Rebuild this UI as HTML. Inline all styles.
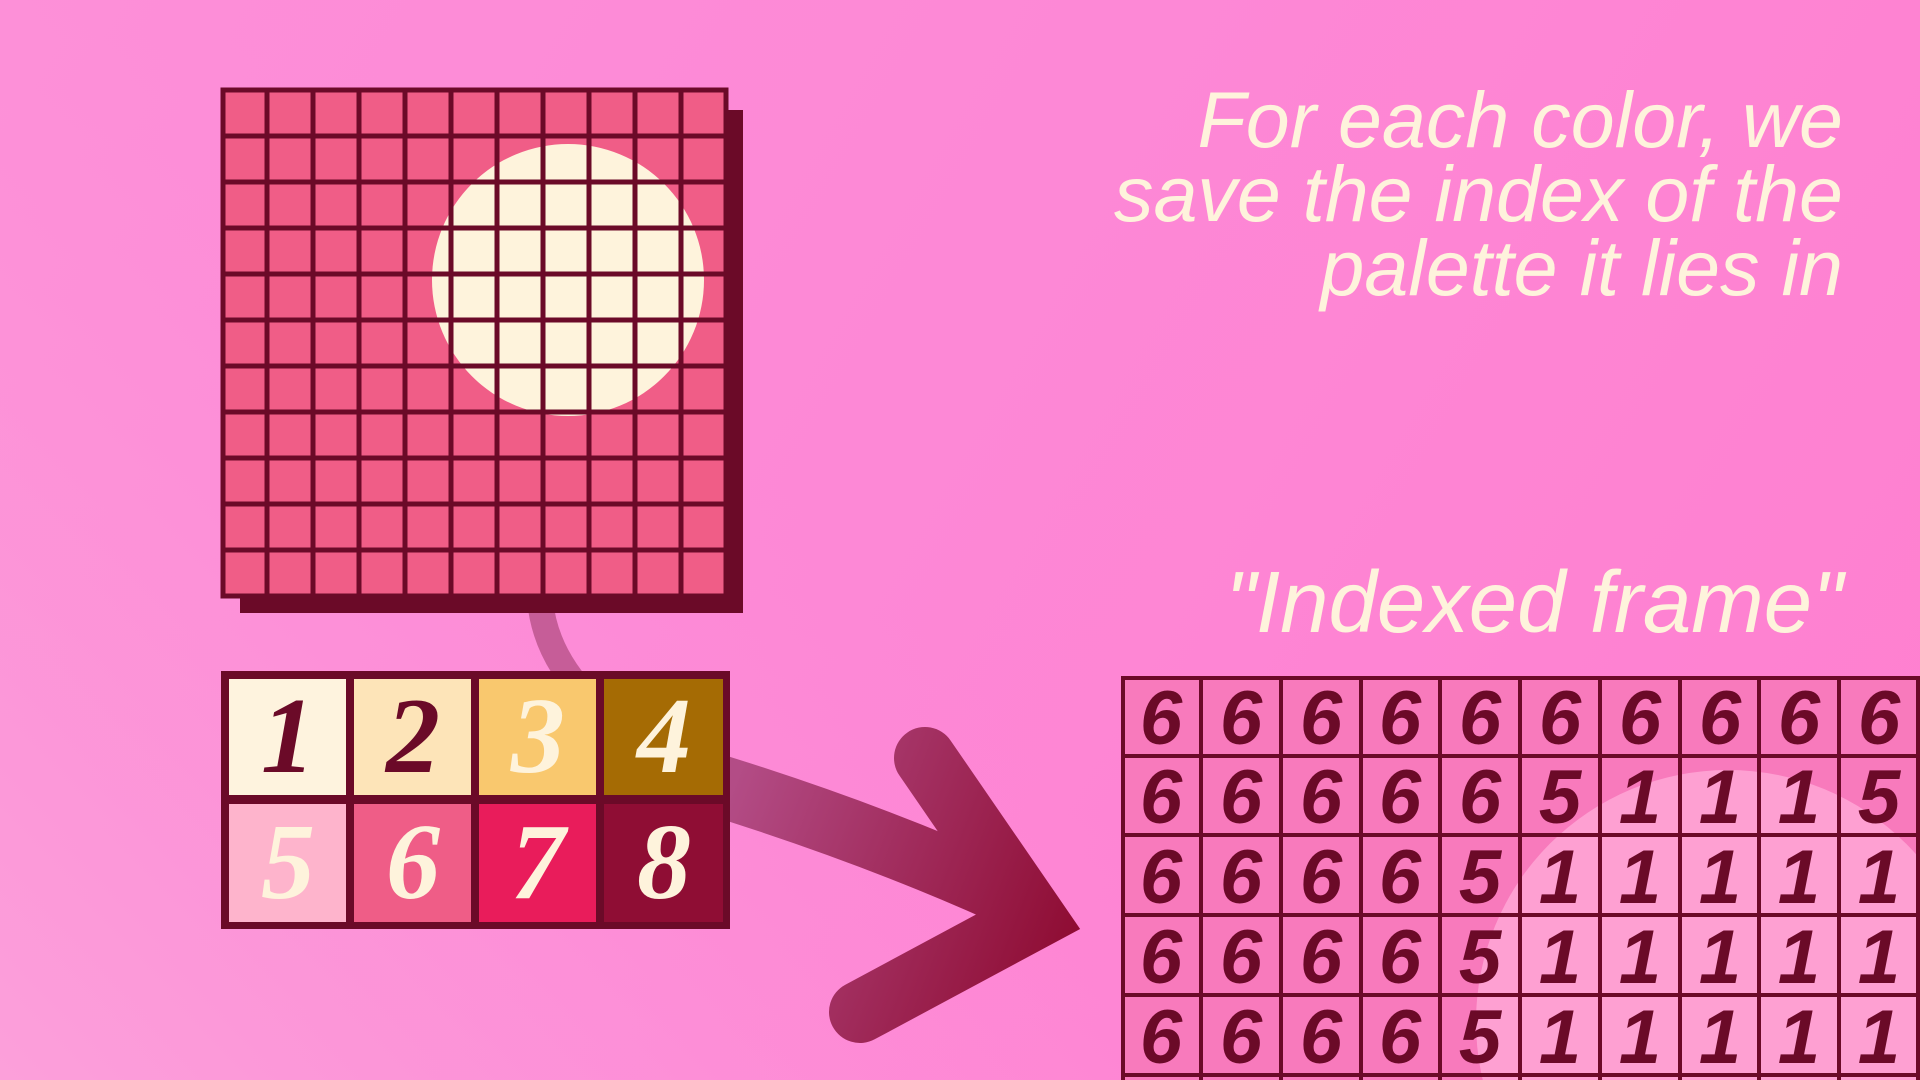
<!DOCTYPE html>
<html><head><meta charset="utf-8"><style>
html,body{margin:0;padding:0;width:1920px;height:1080px;overflow:hidden}
body{background:linear-gradient(120deg,#fd8fd8 0%,#fd88d6 45%,#ff7fcf 100%)}
svg{position:absolute;left:0;top:0;display:block}
.t{font-family:"Liberation Sans",sans-serif;font-style:italic;fill:#fef3dc}
.p{font-family:"Liberation Serif",serif;font-style:italic;font-weight:bold;font-size:108px;text-anchor:middle}
.d{font-family:"Liberation Sans",sans-serif;font-style:italic;font-weight:bold;font-size:76px;fill:#6b0a28;text-anchor:middle}
</style></head><body>
<svg width="1920" height="1080" viewBox="0 0 1920 1080">
<defs>
<linearGradient id="ag" x1="731" y1="790" x2="1075" y2="925" gradientUnits="userSpaceOnUse">
<stop offset="0" stop-color="#b34c86"/><stop offset="1" stop-color="#8f0d34"/></linearGradient>
<linearGradient id="bg2" x1="0" y1="1080" x2="700" y2="400" gradientUnits="userSpaceOnUse">
<stop offset="0" stop-color="#fca0da"/><stop offset="1" stop-color="#fd8fd8" stop-opacity="0"/></linearGradient>
<clipPath id="bc"><rect x="1121" y="676" width="799" height="404"/></clipPath>
</defs>
<rect width="1920" height="1080" fill="url(#bg2)"/>
<path d="M540 600 Q545 655 590 700" fill="none" stroke="#c65d98" stroke-width="26"/>
<path d="M700 780 Q880 835 1030 905" fill="none" stroke="url(#ag)" stroke-width="62"/>
<path d="M925 758 L1035 918 L860 1012" fill="none" stroke="url(#ag)" stroke-width="62" stroke-linecap="round" stroke-linejoin="miter"/>
<rect x="240" y="110" width="503" height="503" fill="#6b0a28"/>
<rect x="221" y="88" width="507" height="510" fill="#f05d87"/>
<circle cx="568" cy="280" r="136" fill="#fef3dc"/>
<g stroke="#6b0a28" stroke-width="5" fill="none">
<rect x="223" y="90" width="503" height="506"/>
<path d="M267 90V596M313 90V596M359 90V596M405 90V596M451 90V596M497 90V596M543 90V596M589 90V596M635 90V596M681 90V596
M223 136H726M223 182H726M223 228H726M223 274H726M223 320H726M223 366H726M223 412H726M223 458H726M223 504H726M223 550H726"/>
</g>
<rect x="221" y="671" width="509" height="258" fill="#6b0a28"/>
<rect x="229" y="679" width="117" height="116" fill="#fef3de"/>
<rect x="354" y="679" width="117" height="116" fill="#fde4b8"/>
<rect x="479" y="679" width="117" height="116" fill="#f9c86e"/>
<rect x="604" y="679" width="119" height="116" fill="#a56b04"/>
<rect x="229" y="804" width="117" height="118" fill="#feb4cc"/>
<rect x="354" y="804" width="117" height="118" fill="#ef5d87"/>
<rect x="479" y="804" width="117" height="118" fill="#e91c5b"/>
<rect x="604" y="804" width="119" height="118" fill="#8f0d34"/>
<text class="p" x="288" y="772" fill="#6b0a28">1</text>
<text class="p" x="413" y="772" fill="#6b0a28">2</text>
<text class="p" x="538" y="772" fill="#fef3dc">3</text>
<text class="p" x="664" y="772" fill="#fef3dc">4</text>
<text class="p" x="288" y="898" fill="#fef3dc">5</text>
<text class="p" x="413" y="898" fill="#fef3dc">6</text>
<text class="p" x="538" y="898" fill="#fef3dc">7</text>
<text class="p" x="664" y="898" fill="#fef3dc">8</text>
<text class="t" x="1843" y="147" font-size="79" text-anchor="end">For each color, we</text>
<text class="t" x="1843" y="221" font-size="79" text-anchor="end">save the index of the</text>
<text class="t" x="1843" y="295" font-size="79" text-anchor="end">palette it lies in</text>
<text class="t" x="1843" y="632" font-size="87" text-anchor="end">"Indexed frame"</text>
<g clip-path="url(#bc)">
<rect x="1121" y="676" width="799" height="404" fill="#f87abc"/>
<circle cx="1728" cy="1022" r="252" fill="#fea0d2"/>
<g stroke="#6b0a28" stroke-width="4" fill="none">
<rect x="1123" y="678" width="820" height="420"/>
<path d="M1201 676V1080M1281 676V1080M1361 676V1080M1440 676V1080M1520 676V1080M1600 676V1080M1680 676V1080M1759 676V1080M1839 676V1080M1918 676V1080
M1121 756H1920M1121 835H1920M1121 915H1920M1121 995H1920M1121 1075H1920"/>
</g>
<text x="1161" y="744" class="d">6</text><text x="1241" y="744" class="d">6</text><text x="1321" y="744" class="d">6</text><text x="1400" y="744" class="d">6</text><text x="1480" y="744" class="d">6</text><text x="1560" y="744" class="d">6</text><text x="1640" y="744" class="d">6</text><text x="1720" y="744" class="d">6</text><text x="1799" y="744" class="d">6</text><text x="1879" y="744" class="d">6</text>
<text x="1161" y="823" class="d">6</text><text x="1241" y="823" class="d">6</text><text x="1321" y="823" class="d">6</text><text x="1400" y="823" class="d">6</text><text x="1480" y="823" class="d">6</text><text x="1560" y="823" class="d">5</text><text x="1640" y="823" class="d">1</text><text x="1720" y="823" class="d">1</text><text x="1799" y="823" class="d">1</text><text x="1879" y="823" class="d">5</text>
<text x="1161" y="903" class="d">6</text><text x="1241" y="903" class="d">6</text><text x="1321" y="903" class="d">6</text><text x="1400" y="903" class="d">6</text><text x="1480" y="903" class="d">5</text><text x="1560" y="903" class="d">1</text><text x="1640" y="903" class="d">1</text><text x="1720" y="903" class="d">1</text><text x="1799" y="903" class="d">1</text><text x="1879" y="903" class="d">1</text>
<text x="1161" y="983" class="d">6</text><text x="1241" y="983" class="d">6</text><text x="1321" y="983" class="d">6</text><text x="1400" y="983" class="d">6</text><text x="1480" y="983" class="d">5</text><text x="1560" y="983" class="d">1</text><text x="1640" y="983" class="d">1</text><text x="1720" y="983" class="d">1</text><text x="1799" y="983" class="d">1</text><text x="1879" y="983" class="d">1</text>
<text x="1161" y="1063" class="d">6</text><text x="1241" y="1063" class="d">6</text><text x="1321" y="1063" class="d">6</text><text x="1400" y="1063" class="d">6</text><text x="1480" y="1063" class="d">5</text><text x="1560" y="1063" class="d">1</text><text x="1640" y="1063" class="d">1</text><text x="1720" y="1063" class="d">1</text><text x="1799" y="1063" class="d">1</text><text x="1879" y="1063" class="d">1</text>
</g>
</svg>
</body></html>
